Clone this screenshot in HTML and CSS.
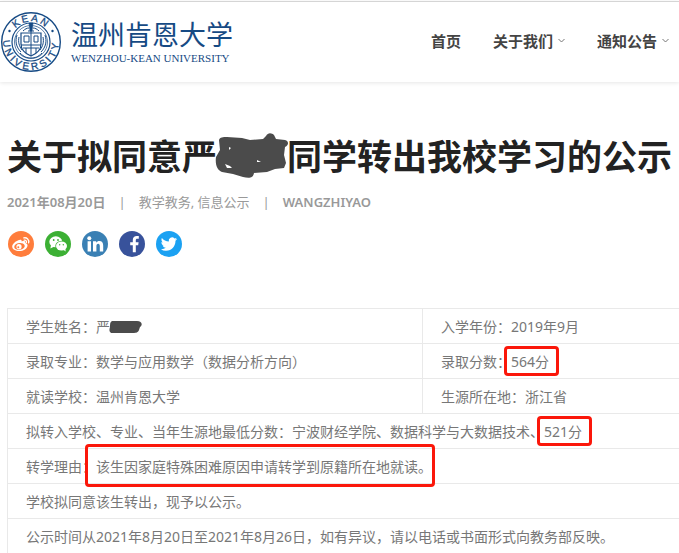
FILE: index.html
```html
<!DOCTYPE html>
<html lang="zh-CN">
<head>
<meta charset="utf-8">
<meta name="viewport" content="width=device-width, initial-scale=1">
<title>温州肯恩大学</title>
<link rel="stylesheet" href="styles.css">
</head>
<body>
<header class="site-header">
  <a class="brand" href="#">
    <svg class="seal" viewBox="0 0 62 62" aria-hidden="true">
      <defs>
        <path id="arc-top" d="M10.5 31a20.500 20.500 0 0 1 41 0"/>
        <path id="arc-bottom" d="M7 17a27.800 27.800 0 1 0 48 0"/>
      </defs>
      <g fill="none" stroke="currentColor">
        <circle cx="31" cy="31" r="29.300" stroke-width="1.400"/>
        <circle cx="31" cy="31" r="19" stroke-width="1.200"/>
        <circle cx="31" cy="31" r="16.500" stroke-width=".7"/>
        <path d="M21 22h20v11c0 7-5 10-10 12-5-2-10-5-10-12z" stroke-width="1.200"/>
        <path d="M21 34h20M31 15v30M24 25h5v6h-5zM34 25h4v6h-4zM26 37v5M36 37v5M23 37h16M28 20h6" stroke-width="1"/>
        <path d="M17 24c-2 6-1 12 4 17M19 26c-1 5 0 9 3 13M45 24c2 6 1 12-4 17M43 26c1 5 0 9-3 13M20 42c4 4 7 5 11 5s7-1 11-5M23 20c2-2 4-3 6-3M33 17c2 0 4 1 6 3" stroke-width="1"/>
        <path d="M29 12h4l-1 8h-2z" fill="currentColor" stroke-width=".6"/>
      </g>
      <g fill="currentColor">
        <circle cx="9.500" cy="20" r="1.200"/><circle cx="52.500" cy="20" r="1.200"/>
        <text class="seal-text seal-top"><textPath href="#arc-top" startOffset="50%" text-anchor="middle">KEAN</textPath></text>
        <text class="seal-text"><textPath href="#arc-bottom" startOffset="50%" text-anchor="middle">UNIVERSITY</textPath></text>
      </g>
    </svg>
    <span class="wordmark">
      <span class="wordmark-zh">温州肯恩大学</span>
      <span class="wordmark-en">WENZHOU-KEAN UNIVERSITY</span>
    </span>
  </a>
  <nav class="nav">
    <a href="#">首页</a>
    <a href="#">关于我们<svg class="caret" viewBox="0 0 7 5" aria-hidden="true"><path d="M.5 1l3 3 3-3"/></svg></a>
    <a href="#">通知公告<svg class="caret" viewBox="0 0 7 5" aria-hidden="true"><path d="M.5 1l3 3 3-3"/></svg></a>
  </nav>
</header>

<main class="article">
  <h1>关于拟同意严<span class="redacted redacted-title"><svg viewBox="0 0 74 46" aria-hidden="true"><path d="M4 7c1-3 4-3 8-3l15 1 8 2 13-1 3-3c2-4 6-3 8-1l2 4 9 1c4 1 4 5 0 7l-1 8 2 8-2 5-9 1-8 3-13 1c-1 6-6 5-11 4l-10-3-11-2c-5-2-7-8-6-15l4-7z"/><path class="gap" d="M10 31l5 2 2 2-5 0zM42 27l4 2-4 0zM14 14l2 1-2 2z"/></svg></span>同学转出我校学习的公示</h1>
  <div class="meta">
    <time datetime="2021-08-20">2021年08月20日</time>
    <span class="topics"><a href="#">教学教务</a>, <a href="#">信息公示</a></span>
    <a href="#">WANGZHIYAO</a>
  </div>

  <div class="share">
    <a class="weibo" href="#" aria-label="微博"><svg viewBox="0 0 26 26"><path d="M11.500 9c1-.4 2.500-.2 2.200 1.500 2-.8 4-.6 3.700 1.400 1.700.5 2.500 1.700 2 3.300-.8 2.800-4 4.800-8 4.800s-7.200-1.700-7.200-4.500c0-2.500 4-6 7.300-6.500z"/><ellipse class="cut" cx="11.500" cy="15.400" rx="5.300" ry="3.400" transform="rotate(-8 11.500 15.400)"/><circle cx="11" cy="15.700" r="2.600"/><circle class="cut" cx="10.300" cy="16.300" r="1"/><path class="line" d="M15.800 6.900c3-.7 5.700 1.800 4.800 5M16.200 9.200c1.500-.3 2.500.8 2.200 2.200"/></svg></a>
    <a class="wechat" href="#" aria-label="微信"><svg viewBox="0 0 26 26"><ellipse cx="10.800" cy="10.800" rx="6.500" ry="5.500"/><path d="M6 14l-.6 3.500 4-2z"/><ellipse class="cut" cx="16.500" cy="15" rx="6.200" ry="5.200"/><ellipse cx="16.500" cy="15" rx="5.500" ry="4.500"/><path d="M18 18.500l2.700 2-.5-3z"/><g class="cut"><circle cx="8.700" cy="9" r=".9"/><circle cx="13" cy="9" r=".9"/><circle cx="14.700" cy="13.700" r=".7"/><circle cx="18.300" cy="13.700" r=".7"/></g></svg></a>
    <a class="linkedin" href="#" aria-label="LinkedIn"><svg viewBox="0 0 26 26"><circle cx="7.300" cy="7.200" r="2"/><path d="M5.600 10.300H9v10.200H5.600zM11 10.300h3.200v1.400c.7-1.100 1.800-1.700 3.200-1.700 2.700 0 3.800 1.700 3.800 4.700v5.800h-3.400v-5.300c0-1.500-.4-2.400-1.600-2.400-1.300 0-1.800 1-1.800 2.400v5.300H11z"/></svg></a>
    <a class="facebook" href="#" aria-label="Facebook"><svg viewBox="0 0 26 26"><path d="M13.800 21.300v-7h-2.600v-3h2.600V9c0-2.700 1.600-4 4-4 1 0 1.700.1 2 .1v2.700h-1.500c-1.200 0-1.500.6-1.500 1.500v2h2.800l-.4 3h-2.400v7z"/></svg></a>
    <a class="twitter" href="#" aria-label="Twitter"><svg viewBox="0 0 26 26"><path transform="translate(4.800 4.900) scale(.68)" d="M23.953 4.570a10 10 0 01-2.825.775 4.958 4.958 0 002.163-2.723c-.951.555-2.005.959-3.127 1.184a4.920 4.920 0 00-8.384 4.482C7.690 8.095 4.067 6.130 1.640 3.162a4.822 4.822 0 00-.666 2.475c0 1.710.87 3.213 2.188 4.096a4.904 4.904 0 01-2.228-.616v.06a4.923 4.923 0 003.946 4.827 4.996 4.996 0 01-2.212.085 4.936 4.936 0 004.604 3.417 9.867 9.867 0 01-6.102 2.105c-.39 0-.779-.023-1.170-.067a13.995 13.995 0 007.557 2.209c9.053 0 13.998-7.496 13.998-13.985 0-.21 0-.42-.015-.63A9.935 9.935 0 0024 4.590z"/></svg></a>
  </div>

  <table class="record">
    <tbody>
      <tr><td class="first">学生姓名：严<span class="redacted redacted-name"><svg viewBox="0 0 33 14" aria-hidden="true"><path d="M3 1h25c5 0 6 4 3 6l-1 3c-1 3-4 3-7 3H4c-4 0-4-3-3-6 0-3 0-5 2-6z"/></svg></span></td><td>入学年份：2019年9月</td></tr>
      <tr><td>录取专业：数学与应用数学（数据分析方向）</td><td>录取分数：<span class="marked">564分</span></td></tr>
      <tr><td>就读学校：温州肯恩大学</td><td>生源所在地：浙江省</td></tr>
      <tr><td colspan="2">拟转入学校、专业、当年生源地最低分数：宁波财经学院、数据科学与大数据技术、<span class="marked">521分</span></td></tr>
      <tr><td colspan="2">转学理由：<span class="marked marked-tall">该生因家庭特殊困难原因申请转学到原籍所在地就读。</span></td></tr>
      <tr><td colspan="2">学校拟同意该生转出，现予以公示。</td></tr>
      <tr><td colspan="2">公示时间从2021年8月20日至2021年8月26日，如有异议，请以电话或书面形式向教务部反映。</td></tr>
    </tbody>
  </table>
</main>
</body>
</html>
```
FILE: styles.css
```css
* {
  box-sizing: border-box;
}

body {
  margin: 0;
  padding-top: 1px;
  background: #fff;
  color: #777;
  font: 14px/20px "Noto Sans", "Noto Sans CJK SC", sans-serif;
  overflow: hidden;
}

a {
  color: inherit;
  text-decoration: none;
}

.site-header {
  display: flex;
  align-items: center;
  justify-content: space-between;
  height: 81px;
  padding-right: 10px;
  border-top: 1px solid #d5d5d5;
  box-shadow: 0 1px 4px rgba(0, 0, 0, 0.1);
}

.brand {
  display: flex;
  align-items: center;
  gap: 9px;
  color: #164a84;
}

.seal {
  width: 62px;
  height: 62px;
}

.seal-text {
  font: 10px "Liberation Sans", sans-serif;
  letter-spacing: 3px;
  stroke: currentColor;
  stroke-width: 0.3;
}

.seal-top {
  letter-spacing: 2px;
}

.wordmark {
  display: flex;
  flex-direction: column;
  padding-bottom: 3px;
  white-space: nowrap;
}

.wordmark-zh {
  font: 27px/34px "Noto Sans CJK SC", sans-serif;
}

.wordmark-en {
  font: 11px/14px "Liberation Serif", serif;
}

.nav {
  display: flex;
  gap: 32px;
  padding-bottom: 3px;
  color: #444;
  font-size: 15px;
  font-weight: 600;
}

.nav a {
  display: flex;
  align-items: center;
  gap: 5px;
}

.caret {
  width: 7px;
  height: 5px;
  fill: none;
  stroke: #777;
}

.article {
  padding: 53px 0 0 7px;
}

h1 {
  margin: 0;
  color: #222;
  font-size: 35px;
  line-height: 44px;
  white-space: nowrap;
}

.redacted {
  position: relative;
  display: inline-block;
}

.redacted svg {
  position: absolute;
  bottom: 0;
  left: 0;
  fill: #4b4b4b;
}

.redacted .gap {
  fill: #fff;
}

.redacted-title {
  width: 70px;
}

.redacted-title svg {
  bottom: -9px;
  left: -2px;
  width: 74px;
  height: 46px;
}

.redacted-name {
  width: 33px;
}

.redacted-name svg {
  bottom: -2px;
  left: -1px;
  width: 33px;
  height: 14px;
}

.meta {
  display: flex;
  margin-top: 13px;
  color: #999;
  font-size: 13px;
  font-weight: 600;
}

.topics {
  font-weight: 400;
}

.meta > * + *::before {
  content: "|";
  margin: 0 13px;
  font-weight: 400;
}

.share {
  display: flex;
  gap: 11px;
  margin: 19px 0 51px 1px;
}

.share a {
  width: 26px;
  height: 26px;
  border-radius: 50%;
  background: currentColor;
}

.share svg {
  display: block;
  fill: #fff;
}

.share .cut {
  fill: currentColor;
}

.share .line {
  fill: none;
  stroke: #fff;
  stroke-width: 1.3;
  stroke-linecap: round;
}

.weibo { color: #ff7d3c; }
.wechat { color: #3cb034; }
.linkedin { color: #3a80b4; }
.facebook { color: #38529b; }
.twitter { color: #1ba1f2; }

.record {
  width: 100%;
  table-layout: fixed;
  border-collapse: separate;
  border-spacing: 0;
  border-top: 1px solid #e9e9e9;
}

.record td {
  height: 35px;
  padding: 2px 0 0 18px;
  border-left: 1px solid #e9e9e9;
  border-bottom: 1px solid #e9e9e9;
  white-space: nowrap;
}

.record .first {
  width: 415px;
}

.marked {
  position: relative;
}

.marked::after {
  content: "";
  position: absolute;
  inset: -6px -10px -5px -7px;
  border: 3px solid #fb170a;
  border-radius: 4px;
}

.marked-tall::after {
  inset: -13px -3px -11px -11px;
}
```
